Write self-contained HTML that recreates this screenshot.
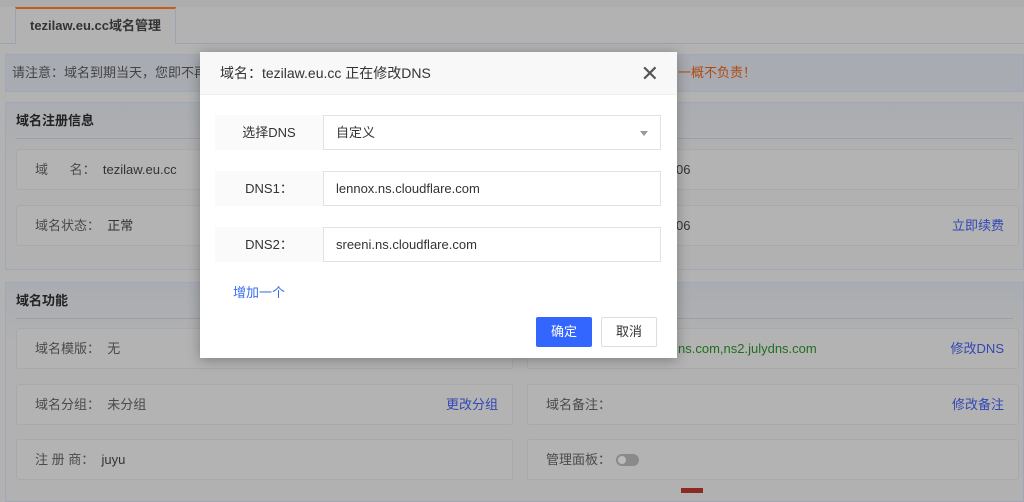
<!DOCTYPE html>
<html style="background:#b2b2b2"><head><meta charset="utf-8"><style>
*{box-sizing:border-box;margin:0;padding:0}
body{width:1024px;height:493px;overflow:hidden;background:#b2b2b2;font-family:"Liberation Sans","Noto Sans CJK SC",sans-serif;font-size:13px;color:#333;position:relative}
.a{position:absolute}
.card{position:absolute;border:1px solid #a9a9a9;border-radius:3px;background:#b3b3b3;height:41px;line-height:39px;padding-left:18px;color:#333}
.card .l{color:#4a4a4a}
.lk{position:absolute;right:14px;top:0;color:#3347b3}
.panel{position:absolute;left:5px;right:0;border:1px solid #9ea8b6;background:linear-gradient(#a9acb1,#b1b1b1 60px)}
.ph{position:absolute;left:10px;right:10px;top:0;height:36px;line-height:36px;font-weight:bold;border-bottom:1px solid #9c9fa4;color:#222}
.modal{position:absolute;left:200px;top:52px;width:477px;height:306px;background:#fff;box-shadow:0 2px 12px rgba(0,0,0,.3)}
.mh{height:43px;background:#f8f8f8;border-bottom:1px solid #eee;line-height:43px;padding-left:20px;font-size:14px;color:#333}
.row{position:absolute;left:15px;width:446px;height:35px}
.row .lb{position:absolute;left:0;top:0;width:108px;height:35px;background:#fafafa;text-align:center;line-height:35px;color:#333}
.row .in{position:absolute;left:108px;top:0;right:0;height:35px;border:1px solid #e2e2e2;line-height:33px;padding-left:12px;color:#333}
</style></head><body>
<div class="a" style="left:0;top:0;width:1024px;height:7px;background:#adadad"></div>
<div class="a" style="left:0;top:43px;width:1024px;height:1px;background:#9aa4b2"></div>
<div class="a" style="left:15px;top:7px;width:161px;height:37px;border-top:2px solid #c45a1c;border-left:1px solid #9aa4b2;border-right:1px solid #9aa4b2;background:#b2b2b2;line-height:34px;text-align:center;font-weight:bold;color:#333;font-size:13px">tezilaw.eu.cc域名管理</div>
<div class="a" style="left:5px;top:54px;width:1019px;height:38px;border:1px solid #9ea8b6;background:#a8abb1;line-height:36px;padding-left:6px;color:#444">请注意：域名到期当天，您即不再是<span style="position:absolute;left:672px;color:#b04a14">一概不负责！</span></div>

<div class="panel" style="top:102px;height:168px"><div class="ph">域名注册信息</div></div>
<div class="card" style="left:16px;top:149px;width:497px"><span class="l">域&nbsp;&nbsp;&nbsp;&nbsp;&nbsp;&nbsp;名：</span>&nbsp;&nbsp;tezilaw.eu.cc</div>
<div class="card" style="left:527px;top:149px;width:492px"></div>
<div class="card" style="left:16px;top:205px;width:497px"><span class="l">域名状态：</span>&nbsp;&nbsp;正常</div>
<div class="card" style="left:527px;top:205px;width:492px"><span class="lk">立即续费</span></div>
<div class="a" style="left:676px;top:218px;color:#333">06</div>
<div class="a" style="left:676px;top:162px;color:#333">06</div>

<div class="panel" style="top:282px;height:220px"><div class="ph">域名功能</div></div>
<div class="card" style="left:16px;top:328px;width:497px"><span class="l">域名模版：</span>&nbsp;&nbsp;<span class="l">无</span></div>
<div class="card" style="left:527px;top:328px;width:492px"><span style="position:absolute;left:150px;color:#1f6e1f">ns.com,ns2.julydns.com</span><span class="lk">修改DNS</span></div>
<div class="card" style="left:16px;top:384px;width:497px"><span class="l">域名分组：</span>&nbsp;&nbsp;<span class="l">未分组</span><span class="lk">更改分组</span></div>
<div class="card" style="left:527px;top:384px;width:492px"><span class="l">域名备注：</span><span class="lk">修改备注</span></div>
<div class="card" style="left:16px;top:439px;width:497px"><span class="l">注 册 商：</span>&nbsp;&nbsp;juyu</div>
<div class="card" style="left:527px;top:439px;width:492px"><span class="l">管理面板：</span><span style="position:absolute;left:88px;top:14px;width:23px;height:12px;border-radius:6px;background:#8a8a8a"></span><span style="position:absolute;left:90px;top:16px;width:8px;height:8px;border-radius:4px;background:#bbb"></span></div>
<div class="a" style="left:681px;top:488px;width:22px;height:5px;background:#8a2a22"></div>

<div class="modal">
<div class="mh">域名：tezilaw.eu.cc 正在修改DNS<span style="position:absolute;right:18px;top:0;font-size:22px;color:#555;font-weight:300">✕</span></div>
<div class="row" style="top:63px"><div class="lb">选择DNS</div><div class="in">自定义<span style="position:absolute;right:12px;top:15px;border:4px solid transparent;border-top:5px solid #999"></span></div></div>
<div class="row" style="top:119px"><div class="lb">DNS1：</div><div class="in">lennox.ns.cloudflare.com</div></div>
<div class="row" style="top:175px"><div class="lb">DNS2：</div><div class="in">sreeni.ns.cloudflare.com</div></div>
<div class="a" style="left:33px;top:230px;color:#3a6cf0">增加一个</div>
<div class="a" style="left:336px;top:265px;width:56px;height:30px;background:#3366ff;color:#fff;line-height:30px;text-align:center;border-radius:2px">确定</div>
<div class="a" style="left:401px;top:265px;width:56px;height:30px;border:1px solid #ddd;color:#333;line-height:28px;text-align:center;border-radius:2px">取消</div>
</div>
</body></html>
